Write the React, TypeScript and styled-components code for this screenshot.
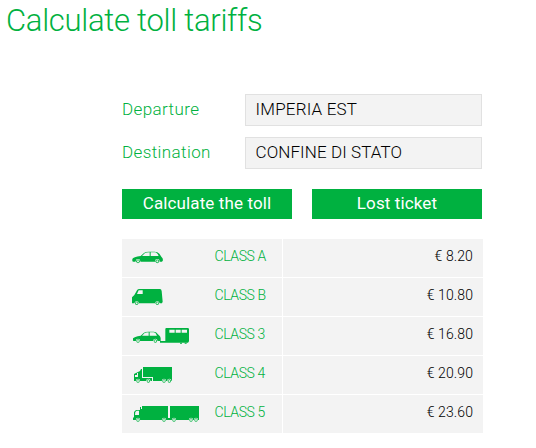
import React from "react";
import styled, { createGlobalStyle } from "styled-components";

const GREEN = "#00b140";
const PANEL = "#f3f3f3";

const GlobalStyle = createGlobalStyle`
  * { box-sizing: border-box; }
  body { margin: 0; background: #fff; font-family: Roboto, "Liberation Sans", sans-serif; }
`;

const Page = styled.main`
  height: 448px;
  overflow: hidden;
  padding-top: 1px;
`;

const Title = styled.h1`
  margin: 0 0 53px 6px;
  height: 40px;
  color: ${GREEN};
  font-size: 31px;
  font-weight: 300;
  line-height: 40px;
  letter-spacing: -0.28px;
  white-space: nowrap;
`;

const Content = styled.div`
  width: 361px;
  margin-left: 122px;
`;

const Form = styled.form`
  width: 360px;
  display: grid;
  gap: 11px;
`;

const Field = styled.label`
  display: grid;
  grid-template-columns: 123px 237px;
  height: 32px;
  line-height: 30px;
`;

const FieldName = styled.span`
  color: ${GREEN};
  font-size: 17px;
  font-weight: 300;
  letter-spacing: 0.4px;
`;

const Input = styled.input<{ $spacing: number }>`
  width: 237px;
  height: 32px;
  padding: 0 10px 2px 9.5px;
  border: 1px solid #e1e1e1;
  border-radius: 0;
  background: ${PANEL};
  color: #000;
  font: 300 17px/28px Roboto, sans-serif;
  letter-spacing: ${(p) => p.$spacing}px;
`;

const Actions = styled.div`
  display: flex;
  gap: 20px;
  margin-top: 9px;
`;

const Button = styled.button`
  width: 170px;
  height: 30px;
  padding: 0 0 2px;
  border: 0;
  background: ${GREEN};
  color: #fff;
  font: 400 17px/28px Roboto, sans-serif;
  letter-spacing: 0.12px;
`;

const Tariffs = styled.div`
  display: grid;
  gap: 1px;
  margin-top: 20px;
`;

const TariffRow = styled.div`
  display: grid;
  grid-template-columns: 160px 200px;
  column-gap: 1px;
  height: 38px;
  font-size: 14px;
  font-weight: 300;
  line-height: 35px;
`;

const ClassCell = styled.div`
  display: flex;
  background: ${PANEL};
  color: ${GREEN};
`;

const ClassName = styled.span`
  margin-left: 12.5px;
  letter-spacing: -0.4px;
  white-space: nowrap;
`;

const Price = styled.div`
  padding-right: 10px;
  background: ${PANEL};
  color: #000;
  letter-spacing: 0.1px;
  text-align: right;
`;

const Icon = styled.svg`
  flex: none;
  width: 80px;
  height: 38px;
  fill: ${GREEN};
`;

const Wheel = ({ x, y, r = 5 }: { x: number; y: number; r?: number }) => (
  <>
    <circle cx={x} cy={y} r={r + 1.5} fill={PANEL} />
    <circle cx={x} cy={y} r={r} />
    <circle cx={x} cy={y} r={r * 0.6} fill="#e4f2e8" />
  </>
);

const Car = () => (
  <Icon viewBox="6 9 240 114">
    <path d="M37 76 L37 69 Q40 63 62 60 L72 51 Q76 47 87 47 H104 Q113 47 118 53 L124 62 Q129 65 129 73 L126 77 H40Z" />
    <path d="M66 60 L75 51 Q78 49 89 49 V60Z M92 49 H105 Q111 49 116 60 L92 60Z" fill={PANEL} />
    <Wheel x={54} y={76} r={5.5} />
    <Wheel x={112} y={76} r={5.5} />
  </Icon>
);

const Van = () => (
  <Icon viewBox="6 6 240 114">
    <path d="M36 82 V64 L43 57 L51 43 Q53 39 59 39 H120 Q124 39 125 45 L128 77 L126 82Z" />
    <path d="M51 54 L56 43 H68 V54Z" fill={PANEL} />
    <Wheel x={50} y={82} r={5} />
    <Wheel x={112} y={82} r={5} />
  </Icon>
);

const CarWithTrailer = () => (
  <Icon viewBox="6 3 240 114">
    <path d="M39 74 V67 Q42 62 62 59 L71 51 Q75 47 85 47 H101 Q109 47 113 54 L120 61 Q123 64 122 75 H42Z" />
    <path d="M66 59 L74 51 Q78 49 86 49 V59Z M89 49 H101 Q107 49 111 59 L89 59Z" fill={PANEL} />
    <Wheel x={54} y={75} />
    <Wheel x={106} y={75} />
    <path d="M120 75 H136 V39 Q136 36 139 36 H203 Q207 36 207 40 V76 L204 80 H120Z" />
    <path d="M148 41 H164 V50 H148Z M167 41 H182 V50 H167Z M185 41 H201 V50 H185Z" fill={PANEL} />
    <path d="M180 80h6v3h-6z M194 80h6v3h-6z" />
  </Icon>
);

const Truck = () => (
  <Icon viewBox="6 3 240 114">
    <path d="M69 36 H156 V78 H99 V66 H69Z" />
    <path d="M42 78 V57 L48 54 L60 48 L63 42 H66 V69 H96 V78Z" />
    <path d="M45 60 H51 V54 H54 V66 H45Z" fill={PANEL} />
    <Wheel x={54} y={78} />
    <Wheel x={85} y={78} />
    <Wheel x={132} y={78} />
    <Wheel x={148} y={78} />
  </Icon>
);

const TruckWithTrailer = () => (
  <Icon viewBox="6 3 240 114">
    <path d="M66 36 H144 V72 H150 V36 H237 V78 H39 V72 L42 69 V54 L48 48 H60 V39 H63 V45 H66Z" />
    <path d="M46 54 L50 50 H57 V63 H45Z" fill={PANEL} />
    <Wheel x={54} y={78} />
    <Wheel x={132} y={78} />
    <Wheel x={162} y={78} />
    <Wheel x={213} y={78} />
    <Wheel x={228} y={78} />
  </Icon>
);

const tariffs = [
  { name: "CLASS A", price: "€ 8.20", Vehicle: Car },
  { name: "CLASS B", price: "€ 10.80", Vehicle: Van },
  { name: "CLASS 3", price: "€ 16.80", Vehicle: CarWithTrailer },
  { name: "CLASS 4", price: "€ 20.90", Vehicle: Truck },
  { name: "CLASS 5", price: "€ 23.60", Vehicle: TruckWithTrailer },
];

export default function App() {
  return (
    <Page>
      <GlobalStyle />
      <Title>Calculate toll tariffs</Title>
      <Content>
        <Form>
          <Field>
            <FieldName>Departure</FieldName>
            <Input $spacing={0.2} defaultValue="IMPERIA EST" />
          </Field>
          <Field>
            <FieldName>Destination</FieldName>
            <Input $spacing={0.1} defaultValue="CONFINE DI STATO" />
          </Field>
          <Actions>
            <Button type="button">Calculate the toll</Button>
            <Button type="button">Lost ticket</Button>
          </Actions>
        </Form>
        <Tariffs>
          {tariffs.map(({ name, price, Vehicle }) => (
            <TariffRow key={name}>
              <ClassCell>
                <Vehicle />
                <ClassName>{name}</ClassName>
              </ClassCell>
              <Price>{price}</Price>
            </TariffRow>
          ))}
        </Tariffs>
      </Content>
    </Page>
  );
}
